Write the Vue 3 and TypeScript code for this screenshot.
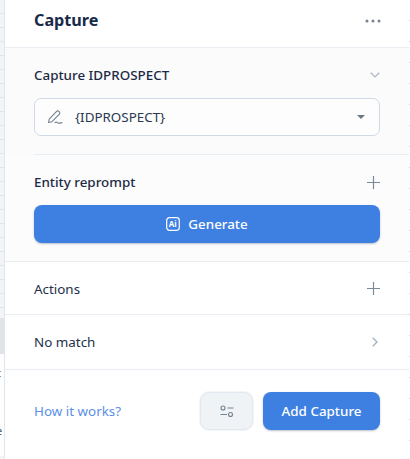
<script setup lang="ts">
const rows: { label: string; icon: 'plus' | 'chevron' }[] = [
  { label: 'Actions', icon: 'plus' },
  { label: 'No match', icon: 'chevron' },
]
</script>

<template>
  <div class="page">
    <div class="canvas-left">
      <div class="node-a"></div>
      <span class="tx tx-a">t</span>
      <div class="node-b"></div>
      <span class="tx tx-b">e</span>
    </div>
    <main class="panel">
      <header class="head">
        <h1>Capture</h1>
        <svg width="16" height="4" viewBox="0 0 16 4"><circle cx="2" cy="2" r="1.5" /><circle cx="8" cy="2" r="1.5" /><circle cx="14" cy="2" r="1.5" /></svg>
      </header>

      <section class="capture">
        <div class="title-row">
          <h2>Capture IDPROSPECT</h2>
          <svg width="10" height="6" viewBox="0 0 10 6" fill="none"><path d="M.7.8 5 5l4.3-4.2" stroke="#a9b5c2" stroke-width="1.2" /></svg>
        </div>
        <div class="select">
          <svg class="pen" width="16" height="16" viewBox="0 0 16 16" fill="none" stroke="#75828f" stroke-width="1.1">
            <path d="M2.2 10.2 9.6 2.4a1.6 1.6 0 0 1 2.3 0l.5.5a1.6 1.6 0 0 1 0 2.2L5 12.7l-3.4.8z" stroke-linejoin="round" />
            <path d="M8 13.6c1.500-1.200 1.800-.4 2.500.3.800.6 1.700.4 4.500-.3" stroke-linecap="round" />
          </svg>
          <span class="value">{IDPROSPECT}</span>
          <span class="caret"></span>
        </div>
      </section>

      <section class="reprompt">
        <div class="title-row">
          <h2>Entity reprompt</h2>
          <svg width="13" height="13" viewBox="0 0 13 13"><path d="M6.500 0v13M0 6.500h13" stroke="#7b8a98" stroke-width="1.2" /></svg>
        </div>
        <button class="primary generate">
          <svg width="14" height="14" viewBox="0 0 14 14" fill="none">
            <rect x=".7" y=".7" width="12.600" height="12.600" rx="2.800" stroke="#fff" stroke-width="1.200" />
            <text x="2.800" y="10.300" font-size="8" font-weight="700" fill="#fff" font-family="'Noto Sans', sans-serif">Ai</text>
          </svg>
          <span>Generate</span>
        </button>
      </section>

      <div v-for="row in rows" :key="row.label" class="row" :class="row.icon">
        <span>{{ row.label }}</span>
        <svg v-if="row.icon === 'plus'" width="13" height="13" viewBox="0 0 13 13"><path d="M6.500 0v13M0 6.500h13" stroke="#7b8a98" stroke-width="1.2" /></svg>
        <svg v-else width="6" height="10" viewBox="0 0 6 10" fill="none"><path d="M.8.7 5 5 .8 9.300" stroke="#a3afbc" stroke-width="1.300" /></svg>
      </div>

      <footer class="foot">
        <a class="link">How it works?</a>
        <button class="settings">
          <svg width="14" height="13" viewBox="0 0 14 13" fill="none" stroke="#75828f" stroke-width="1.100">
            <circle cx="3" cy="3" r="2" />
            <path d="M7.500 3H13.500M.5 9.500H7" />
            <circle cx="10.500" cy="9.500" r="2" />
          </svg>
        </button>
        <button class="primary add">Add Capture</button>
      </footer>
    </main>
    <div class="canvas-right"></div>
  </div>
</template>

<style>
html, body { margin: 0; background: #fff; }
</style>

<style scoped>
.page {
  display: flex;
  width: 410px;
  height: 459px;
  overflow: hidden;
  font-family: "Noto Sans", sans-serif;
  color: #1d2a44;
}
.canvas-left {
  position: relative;
  width: 4px;
  flex: none;
  overflow: hidden;
  background: repeating-linear-gradient(#f2f4f6 0 13px, #dfe5ea 13px 14px);
  background-color: #f4f6f8;
}
.node-a {
  position: absolute;
  top: 318px;
  left: 0;
  width: 4px;
  height: 36px;
  background: #e0e4e8;
}
.node-b {
  position: absolute;
  top: 354px;
  left: 0;
  width: 4px;
  height: 102px;
  background: #fff;
}
.tx {
  position: absolute;
  z-index: 1;
  left: -3px;
  font-size: 11px;
  line-height: 12px;
  color: #4a5568;
}
.tx-a { top: 367px; }
.tx-b { top: 425px; left: -4px; }
.panel {
  flex: 1;
  min-width: 0;
  display: flex;
  flex-direction: column;
  background: #fff;
  border-left: 1px solid #dfe6f2;
}
.canvas-right {
  width: 1px;
  flex: none;
  background: repeating-linear-gradient(#fff 0 20px, #cfd6dc 20px 21px);
}
.head {
  height: 40px;
  padding: 0 28px 7px 29px;
  display: flex;
  align-items: center;
  justify-content: space-between;
  border-bottom: 1px solid #eaeef3;
}
.head svg { fill: #75828f; margin-top: 1px; }
h1 {
  margin: 0;
  font-size: 16.2px;
  font-weight: 700;
  line-height: 24px;
  color: #172a4a;
}
h2 {
  margin: 0;
  font-size: 13.4px;
  font-weight: 500;
  line-height: 18px;
  color: #1d2a44;
}
.capture {
  height: 107px;
  padding: 18px 29px 0 29px;
  box-sizing: border-box;
  background: #fbfbfc;
  position: relative;
}
.capture::after {
  content: "";
  position: absolute;
  left: 29px;
  right: 0;
  bottom: 0;
  height: 1px;
  background: #e8eef5;
}
.title-row {
  display: flex;
  align-items: center;
  justify-content: space-between;
  height: 18px;
}
.select {
  margin-top: 14px;
  height: 38px;
  box-sizing: border-box;
  display: flex;
  align-items: center;
  padding: 0 14px 0 12px;
  border: 1px solid #d0dae6;
  border-radius: 7px;
  background: #fdfdfe;
}
.pen { flex: none; }
.value {
  margin-left: 12px;
  flex: 1;
  font-size: 13.4px;
  color: #2a3950;
}
.caret {
  width: 0;
  height: 0;
  border-left: 4px solid transparent;
  border-right: 4px solid transparent;
  border-top: 4px solid #6a7886;
}
.reprompt {
  height: 107px;
  padding: 18px 29px 0 29px;
  box-sizing: border-box;
  background: #fcfcfd;
  border-bottom: 1px solid #e8ebf0;
}
button {
  font-family: inherit;
  border: 0;
  cursor: pointer;
}
.primary {
  background: #3d80e2;
  color: #fff;
  font-size: 13.4px;
  font-weight: 500;
  height: 38px;
  border-radius: 8px;
  box-shadow: 0 1px 2px rgba(30, 50, 80, .3);
}
.generate {
  width: 100%;
  margin-top: 14px;
  display: flex;
  align-items: center;
  justify-content: center;
  gap: 8px;
}
.row {
  padding: 0 30px 0 29px;
  display: flex;
  align-items: center;
  justify-content: space-between;
  font-size: 13.4px;
  color: #22304a;
  border-bottom: 1px solid #e8edf3;
}
.row.plus { height: 51px; padding-top: 1px; padding-right: 29px; }
.row.chevron { height: 54px; padding-right: 31px; }
.foot {
  flex: 1;
  display: flex;
  align-items: flex-start;
  padding: 22px 29px 0 29px;
}
.link {
  margin-top: 10px;
  font-size: 13.4px;
  line-height: 18px;
  color: #5a90e6;
  flex: 1;
}
.settings {
  width: 53px;
  height: 38px;
  border-radius: 9px;
  background: #eff3f6;
  border: 1px solid #e2e8f0;
  box-shadow: 0 0 0 1px #f3f5f8;
  display: flex;
  align-items: center;
  justify-content: center;
}
.add {
  width: 117px;
  margin-left: 10px;
}
</style>
